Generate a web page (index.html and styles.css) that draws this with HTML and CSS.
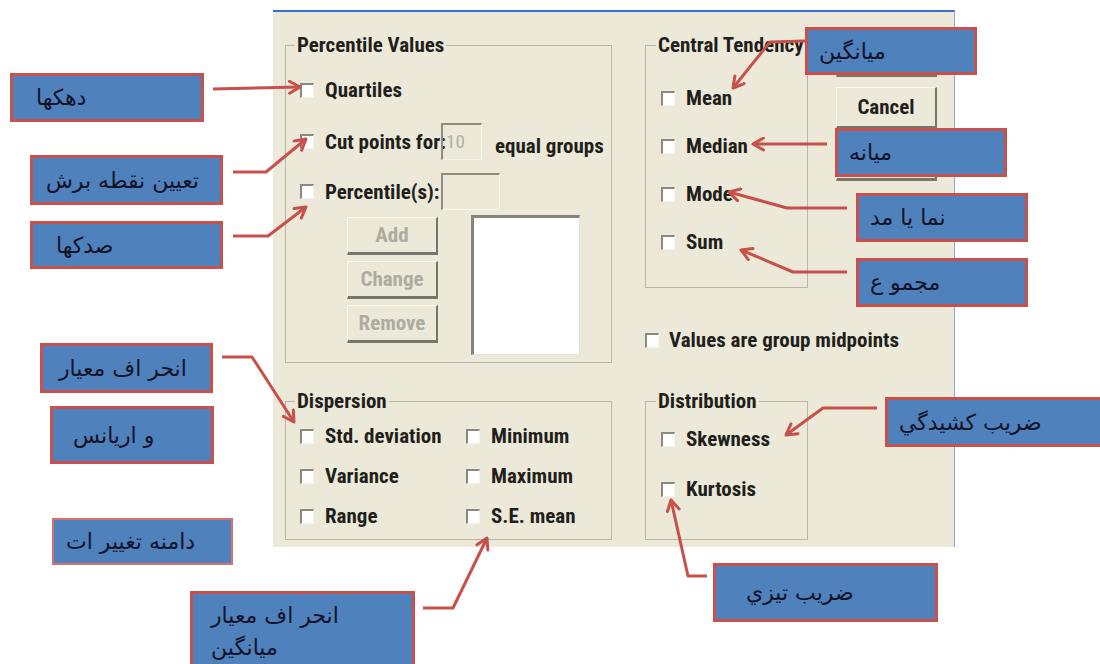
FILE: index.html
```html
<!DOCTYPE html>
<html lang="en">
<head>
  <meta charset="UTF-8">
  <title>Frequencies: Statistics</title>
  <link rel="stylesheet" href="styles.css">
</head>
<body>
<div class="canvas">

  <div class="dialog">
    <div class="top">
      <fieldset class="group pct">
        <legend>Percentile Values</legend>
        <div class="row first"><span class="cb"></span>Quartiles</div>
        <div class="row tall cut">
          <span class="cb"></span><span class="lbl">Cut points for:</span>
          <span class="box small">10</span><span class="after">equal groups</span>
        </div>
        <div class="row tall perc">
          <span class="cb"></span><span class="lbl">Percentile(s):</span>
          <span class="box wide"></span>
        </div>
        <div class="pct-list">
          <div class="btn-col">
            <button class="btn off">Add</button>
            <button class="btn off">Change</button>
            <button class="btn off">Remove</button>
          </div>
          <div class="listbox"></div>
        </div>
      </fieldset>

      <div class="mid">
        <fieldset class="group central">
          <legend>Central Tendency</legend>
          <div class="row"><span class="cb"></span>Mean</div>
          <div class="row"><span class="cb"></span>Median</div>
          <div class="row"><span class="cb"></span>Mode</div>
          <div class="row"><span class="cb"></span>Sum</div>
        </fieldset>
        <div class="row midpoints"><span class="cb"></span>Values are group midpoints</div>
      </div>

      <!-- Continue and Help sit under the callouts, so their captions are left out -->
      <div class="actions">
        <button class="btn big" aria-label="Continue"></button>
        <button class="btn big">Cancel</button>
        <button class="btn big" aria-label="Help"></button>
      </div>
    </div>

    <div class="bottom">
      <fieldset class="group disp">
        <legend>Dispersion</legend>
        <div class="grid">
          <div class="row"><span class="cb"></span>Std. deviation</div>
          <div class="row"><span class="cb"></span>Minimum</div>
          <div class="row"><span class="cb"></span>Variance</div>
          <div class="row"><span class="cb"></span>Maximum</div>
          <div class="row"><span class="cb"></span>Range</div>
          <div class="row"><span class="cb"></span>S.E. mean</div>
        </div>
      </fieldset>

      <fieldset class="group dist">
        <legend>Distribution</legend>
        <div class="row"><span class="cb"></span>Skewness</div>
        <div class="row"><span class="cb"></span>Kurtosis</div>
      </fieldset>
    </div>
  </div>

  <!-- callout arrows -->
  <svg class="arrows" width="1100" height="664" viewBox="0 0 1100 664">
    <defs>
      <marker id="head" viewBox="0 0 10 10" refX="8.5" refY="5" markerWidth="15" markerHeight="15" markerUnits="userSpaceOnUse" orient="auto">
        <path d="M1.5,1 L8.5,5 L1.5,9" fill="none" stroke="#c8504b" stroke-width="2" stroke-linecap="round" stroke-linejoin="round"/>
      </marker>
    </defs>
    <g fill="none" stroke="#c8504b" stroke-width="3" stroke-linejoin="round" marker-end="url(#head)">
      <path d="M213,89 L300,87"/>
      <path d="M233,172 L266,172 L306,139"/>
      <path d="M233,236 L268,236 L306,207"/>
      <path d="M222,357 L252,357 L294,422"/>
      <path d="M423,608 L453,608 L487,538"/>
      <path d="M805,41 L770,42 L733,88"/>
      <path d="M827,144 L753,144"/>
      <path d="M847,208 L787,208 L729,192"/>
      <path d="M847,272 L793,272 L741,250"/>
      <path d="M877,408 L823,408 L786,435"/>
      <path d="M707,576 L688,576 L671,500"/>
    </g>
  </svg>

  <div class="note n-deciles"><span dir="rtl">دهکها</span></div>
  <div class="note n-cut"><span dir="rtl">تعیین نقطه برش</span></div>
  <div class="note n-perc"><span dir="rtl">صدکها</span></div>
  <div class="note n-sd"><span dir="rtl">انحر اف معیار</span></div>
  <div class="note n-var"><span dir="rtl">و اریانس</span></div>
  <div class="note n-range"><span dir="rtl">دامنه تغییر ات</span></div>
  <div class="note n-se"><span dir="rtl">انحر اف معیار<br>میانگین</span></div>
  <div class="note n-mean"><span dir="rtl">میانگین</span></div>
  <div class="note n-median"><span dir="rtl">میانه</span></div>
  <div class="note n-mode"><span dir="rtl">نما یا مد</span></div>
  <div class="note n-sum"><span dir="rtl">مجمو ع</span></div>
  <div class="note n-kurt"><span dir="rtl">ضریب کشیدگي</span></div>
  <div class="note n-skew"><span dir="rtl">ضریب تیزي</span></div>

</div>
</body>
</html>
```

FILE: styles.css
```css
body {
  margin: 0;
  background: #fff;
}

.canvas {
  position: relative;
  width: 1100px;
  height: 664px;
  padding-top: 10px;
  box-sizing: border-box;
  overflow: hidden;
  background: #fff;
}

/* ---- dialog ---- */

.dialog {
  margin-left: 273px;
  width: 682px;
  height: 537px;
  box-sizing: border-box;
  background: #ece9d9;
  border-top: 2px solid #3d69d4;
  border-right: 1px solid #8ea2e4;
  padding: 23px 0 0 12px;
  display: flex;
  flex-direction: column;
  gap: 28px;
  font-family: "Roboto Condensed", "DejaVu Sans Condensed", "Liberation Sans Narrow", "Liberation Sans", sans-serif;
  font-stretch: condensed;
  font-weight: bold;
  font-size: 21px;
  color: #1f1f1c;
}

.top,
.bottom {
  display: flex;
}

.group {
  margin: 0;
  box-sizing: border-box;
  border: 1px solid #b9b6a6;
  padding: 0 0 0 14px;
  min-width: 0;
}

.group legend {
  line-height: 20px;
  padding: 0 2px;
  margin-left: -5px;
  white-space: nowrap;
}

.row {
  display: flex;
  align-items: center;
  height: 30px;
  white-space: nowrap;
}

.cb {
  flex: none;
  width: 14px;
  height: 15px;
  box-sizing: border-box;
  margin-right: 11px;
  background: #fff;
  border-top: 2px solid #8b897d;
  border-left: 2px solid #8b897d;
  border-right: 1px solid #f4f3ec;
  border-bottom: 1px solid #f4f3ec;
}

/* percentile values */

.pct {
  width: 327px;
  height: 328px;
  margin-right: 33px;
}

.pct .first {
  margin-top: 20px;
}

.row.tall {
  height: 37px;
}

.cut {
  margin-top: 18px;
}

.perc {
  margin-top: 13px;
}

.lbl {
  width: 116px;
  flex: none;
}

.box {
  flex: none;
  height: 37px;
  box-sizing: border-box;
  border-top: 2px solid #8e8c80;
  border-left: 2px solid #8e8c80;
  border-right: 1px solid #f7f6f0;
  border-bottom: 1px solid #f7f6f0;
  font-weight: normal;
  font-size: 19px;
  color: #b3b1a4;
  padding: 5px 0 0 3px;
}

.box.small {
  width: 41px;
}

.box.wide {
  width: 59px;
}

.after {
  margin-left: 13px;
  padding-top: 9px;
}

.pct-list {
  display: flex;
  gap: 33px;
  margin-top: 5px;
  padding-left: 47px;
}

.btn-col {
  display: flex;
  flex-direction: column;
  gap: 6px;
  margin-top: 2px;
}

.btn {
  font: inherit;
  background: #ece9d9;
  color: #1f1f1c;
  border-top: 1px solid #fbfaf5;
  border-left: 1px solid #fbfaf5;
  border-right: 2px solid #77766c;
  border-bottom: 3px solid #77766c;
  padding: 0;
  box-sizing: border-box;
}

.btn.off {
  width: 91px;
  height: 38px;
  color: #aeac9f;
}

.listbox {
  width: 109px;
  height: 140px;
  box-sizing: border-box;
  background: #fff;
  border-top: 3px solid #85837a;
  border-left: 3px solid #85837a;
  border-right: 1px solid #e4e2d6;
  border-bottom: 1px solid #e4e2d6;
}

/* central tendency */

.mid {
  width: 163px;
  margin-right: 28px;
}

.central {
  height: 253px;
  padding-left: 15px;
}

.central .row {
  margin-top: 18px;
}

.central .row:first-of-type {
  margin-top: 28px;
}

.midpoints {
  margin-top: 37px;
}

.midpoints .cb {
  margin-right: 10px;
}

.actions {
  display: flex;
  flex-direction: column;
  gap: 10px;
}

.btn.big {
  width: 101px;
  height: 42px;
}

/* bottom groups */

.disp {
  width: 327px;
  height: 149px;
  margin-right: 33px;
}

.grid {
  display: grid;
  grid-template-columns: 166px auto;
  row-gap: 10px;
  padding-top: 10px;
}

.dist {
  width: 163px;
  height: 149px;
  padding-left: 15px;
}

.dist .row:first-of-type {
  margin-top: 13px;
}

.dist .row + .row {
  margin-top: 20px;
}

/* ---- annotations ---- */

.arrows {
  position: absolute;
  left: 0;
  top: 0;
  pointer-events: none;
}

.note {
  position: absolute;
  display: flex;
  align-items: center;
  box-sizing: border-box;
  background: #4f81bd;
  border: 3px solid #c9504b;
  color: #121228;
  font-family: "DejaVu Sans", sans-serif;
  font-size: 22px;
  white-space: nowrap;
}

.note span {
  text-align: left;
}

.n-deciles { left: 10px;  top: 73px;  width: 194px; height: 49px; padding-left: 23px; }
.n-cut     { left: 30px;  top: 155px; width: 193px; height: 50px; padding-left: 13px; }
.n-perc    { left: 30px;  top: 221px; width: 193px; height: 48px; padding-left: 23px; }
.n-sd      { left: 40px;  top: 343px; width: 173px; height: 50px; padding-left: 16px; }
.n-var     { left: 50px;  top: 406px; width: 164px; height: 58px; padding-left: 20px; }
.n-range   { left: 52px;  top: 518px; width: 181px; height: 47px; padding-left: 12px; border: 2px solid #d4716c; }
.n-se      { left: 190px; top: 591px; width: 225px; height: 90px; padding: 6px 0 0 18px; align-items: flex-start; line-height: 32px; }
.n-mean    { left: 805px; top: 27px;  width: 172px; height: 48px; padding-left: 11px; }
.n-median  { left: 835px; top: 128px; width: 172px; height: 49px; padding-left: 11px; }
.n-mode    { left: 856px; top: 193px; width: 172px; height: 49px; padding-left: 11px; }
.n-sum     { left: 856px; top: 258px; width: 172px; height: 49px; padding-left: 11px; }
.n-kurt    { left: 885px; top: 397px; width: 240px; height: 50px; padding-left: 11px; }
.n-skew    { left: 713px; top: 563px; width: 225px; height: 59px; padding-left: 30px; }
```
